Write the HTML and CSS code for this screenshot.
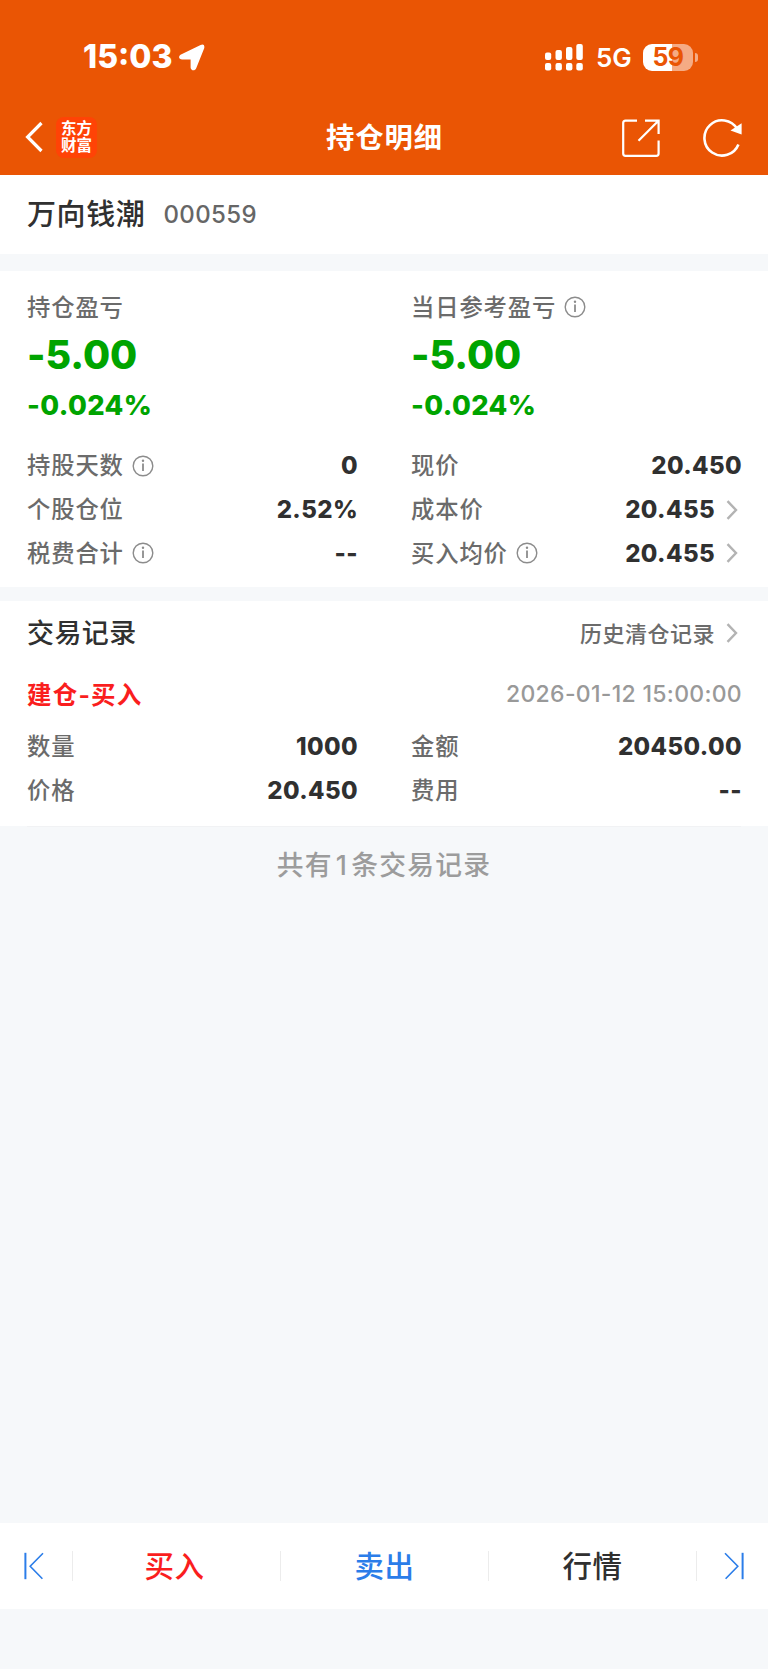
FILE: index.html
```html
<!DOCTYPE html>
<html lang="zh-CN">
<head>
  <meta charset="UTF-8">
  <title>持仓明细</title>
  <link rel="stylesheet" href="styles.css">
</head>
<body>
  <svg width="0" height="0" class="defs">
    <symbol id="info" viewBox="0 0 22 22">
      <circle cx="11" cy="11" r="9.8" fill="none" stroke="#8c8c8c" stroke-width="1.4"/>
      <path d="M11 8.6V16" stroke="#8c8c8c" stroke-width="1.8"/>
      <circle cx="11" cy="5.8" r="1.2" fill="#8c8c8c"/>
    </symbol>
    <symbol id="arrow" viewBox="0 0 12 20">
      <path d="M1.5 1.2L10 10L1.5 18.8" fill="none" stroke="#b3b3b3" stroke-width="2.4"/>
    </symbol>
  </svg>

  <header class="header">
    <div class="status">
      <span class="time">15:03</span>
      <svg class="location" width="26" height="27" viewBox="0 0 26 27">
        <path d="M2 10.6L21.6 .9Q26.2-.6 25.2 4.2L17.2 24.2C15.8 27.4 11.8 26.6 11.6 23.4V15.4H3.2C-.6 15.2-.8 12.2 2 10.6Z" fill="#fff"/>
      </svg>
      <svg class="signal" width="38" height="27" viewBox="0 0 38 27" fill="#fff">
        <rect x="0" y="8.5" width="6.2" height="7.5" rx="2"/>
        <rect x="10.5" y="6" width="6.4" height="10" rx="2"/>
        <rect x="21" y="3" width="6.4" height="13" rx="2"/>
        <rect x="31.3" y="0" width="6.5" height="16" rx="2"/>
        <rect x="0" y="19" width="6.2" height="7.5" rx="2"/>
        <rect x="10.5" y="19" width="6.4" height="7.5" rx="2"/>
        <rect x="21" y="19" width="6.4" height="7.5" rx="2"/>
        <rect x="31.3" y="19" width="6.5" height="7.5" rx="2"/>
      </svg>
      <span class="network">5G</span>
      <div class="battery"><span class="battery-num">59</span></div>
      <span class="battery-cap"></span>
    </div>
    <div class="nav">
      <svg class="back" width="18" height="32" viewBox="0 0 18 32">
        <path d="M16.5 2L2.6 16L16.5 30" fill="none" stroke="#fff" stroke-width="3.2"/>
      </svg>
      <div class="logo">东方<br>财富</div>
      <h1 class="title">持仓明细</h1>
      <svg class="share" width="38" height="38" viewBox="0 0 38 38" fill="none" stroke="#fff" stroke-width="2.2">
        <path d="M15 1.6H3.5Q1.2 1.6 1.2 4V34.5Q1.2 36.8 3.5 36.8H34.3Q36.6 36.8 36.6 34.5V21.5"/>
        <path d="M23 1.6H36.6V15M36.2 2L16.5 21.8"/>
      </svg>
      <svg class="refresh" width="40" height="39" viewBox="0 0 40 39">
        <path d="M35.4 26.4A17.6 17.6 0 1 1 34.2 11" fill="none" stroke="#fff" stroke-width="2.6"/>
        <path d="M38.6 5.2V16.6L27.5 12.6Z" fill="#fff"/>
      </svg>
    </div>
  </header>

  <section class="stock">
    <span class="stock-name">万向钱潮</span>
    <span class="stock-code">000559</span>
  </section>

  <section class="summary">
    <div class="cols">
      <div class="col">
        <div class="label">持仓盈亏</div>
        <div class="profit">-5.00</div>
        <div class="percent">-0.024%</div>
      </div>
      <div class="col">
        <div class="label">当日参考盈亏<svg class="info"><use href="#info"/></svg></div>
        <div class="profit">-5.00</div>
        <div class="percent">-0.024%</div>
      </div>
    </div>
    <div class="cols details">
      <div class="col">
        <div class="row"><span class="label">持股天数<svg class="info"><use href="#info"/></svg></span><span class="value">0</span></div>
        <div class="row"><span class="label">个股仓位</span><span class="value">2.52%</span></div>
        <div class="row"><span class="label">税费合计<svg class="info"><use href="#info"/></svg></span><span class="value">--</span></div>
      </div>
      <div class="col">
        <div class="row"><span class="label">现价</span><span class="value">20.450</span></div>
        <div class="row"><span class="label">成本价</span><span class="value">20.455<svg class="arrow"><use href="#arrow"/></svg></span></div>
        <div class="row"><span class="label">买入均价<svg class="info"><use href="#info"/></svg></span><span class="value">20.455<svg class="arrow"><use href="#arrow"/></svg></span></div>
      </div>
    </div>
  </section>

  <section class="records">
    <div class="records-head">
      <h2>交易记录</h2>
      <span class="history">历史清仓记录<svg class="arrow"><use href="#arrow"/></svg></span>
    </div>
    <div class="trade-head">
      <span class="trade-type">建仓-买入</span>
      <span class="trade-time">2026-01-12 15:00:00</span>
    </div>
    <div class="cols trade">
      <div class="col">
        <div class="row"><span class="label">数量</span><span class="value">1000</span></div>
        <div class="row"><span class="label">价格</span><span class="value">20.450</span></div>
      </div>
      <div class="col">
        <div class="row"><span class="label">金额</span><span class="value">20450.00</span></div>
        <div class="row"><span class="label">费用</span><span class="value">--</span></div>
      </div>
    </div>
  </section>
  <p class="total">共有<span class="count">1</span>条交易记录</p>

  <footer class="tabs">
    <a class="tab-end first">
      <svg width="20" height="28" viewBox="0 0 20 28" fill="none" stroke="#2b7de9">
        <path d="M1.4 .8V27.2" stroke-width="2"/>
        <path d="M19 1.2L6.2 14.2L18.4 26.8" stroke-width="1.6"/>
      </svg>
    </a>
    <a class="tab buy">买入</a>
    <a class="tab sell">卖出</a>
    <a class="tab quote">行情</a>
    <a class="tab-end last">
      <svg width="20" height="28" viewBox="0 0 20 28" fill="none" stroke="#2b7de9">
        <path d="M18.6 .8V27.2" stroke-width="2"/>
        <path d="M1 1.2L13.8 14.2L1.6 26.8" stroke-width="1.6"/>
      </svg>
    </a>
  </footer>
</body>
</html>
```
FILE: styles.css
```css
* { box-sizing: border-box; }
body { margin: 0; min-height: 1669px; padding-bottom: 60px; display: flex; flex-direction: column; background: #f6f8fa; color: #303030; font-family: Inter, "Noto Sans CJK SC", sans-serif; }
h1, h2, p { margin: 0; }
svg { flex: none; }
.defs { position: absolute; }

.header { height: 175px; background: #ea5504; color: white; }
.status { display: flex; align-items: center; height: 100px; padding: 14px 0 0 83px; }
.time { width: 96px; font-size: 32px; font-weight: 800; line-height: 40px; }
.location { margin-top: 1px; }
.signal { margin-left: 340px; }
.network { width: 47px; margin-left: 13px; padding-top: 1px; font-size: 26px; font-weight: 600; line-height: 40px; }
.battery { width: 50px; height: 27px; border-radius: 9px; background: linear-gradient(90deg, #fff 29px, #f5ab84 29px); text-align: center; }
.battery-num { display: block; font-size: 25px; font-weight: 700; line-height: 27px; letter-spacing: -0.5px; color: #ea5504; }
.battery-cap { width: 3px; height: 9px; margin-left: 2px; border-radius: 0 4px 4px 0; background: #f5ab84; }
.nav { display: flex; align-items: center; height: 75px; padding: 0 24px 0 25px; }
.back { margin-bottom: 1px; }
.logo { width: 41px; height: 41px; margin-left: 13px; padding-top: 3px; border-radius: 8px; background: #ff4306; font-size: 15.5px; font-weight: 700; line-height: 17px; text-align: center; }
.title { flex: 1; margin-left: 50px; font-size: 28.3px; letter-spacing: 1px; line-height: 40px; text-align: center; }
.refresh { margin: 0 1px 1px 43px; }

.stock { display: flex; align-items: center; height: 79px; padding: 0 27px; background: white; }
.stock-name { font-size: 29px; font-weight: 500; letter-spacing: 0.6px; line-height: 40px; }
.stock-code { margin-left: 18px; font-size: 24px; font-weight: 500; letter-spacing: 0.4px; color: #666; }

.summary { height: 316px; margin-top: 17px; padding-top: 18px; background: white; }
.cols { display: grid; grid-template-columns: 331px 331px; column-gap: 53px; padding-left: 27px; }
.label { display: flex; align-items: center; height: 36px; padding-bottom: 3px; font-size: 23.3px; font-weight: 500; letter-spacing: 0.9px; color: #6b6b6b; }
.info { width: 22px; height: 22px; margin: 3px 0 0 8px; }
.profit { height: 60px; font-size: 39.3px; font-weight: 800; line-height: 60px; font-feature-settings: "calt" 0; color: #00a400; }
.percent { height: 42px; font-size: 27.3px; font-weight: 800; line-height: 42px; letter-spacing: 0.4px; font-feature-settings: "calt" 0; color: #00a400; }
.details { margin-top: 17px; }
.row { display: flex; align-items: center; justify-content: space-between; height: 43.7px; }
.value { display: flex; align-items: center; font-size: 24px; font-weight: 800; letter-spacing: 0.4px; font-feature-settings: "calt" 0; }
.arrow { width: 12px; height: 20px; margin: 0 4px 0 11px; }

.records { height: 225px; margin-top: 14px; background: white; }
.records-head, .trade-head { display: flex; align-items: center; justify-content: space-between; padding: 0 26px 0 27px; }
.records-head { height: 64px; padding-bottom: 3px; }
h2 { font-size: 27px; font-weight: 500; letter-spacing: 0.4px; }
.history { display: flex; align-items: center; font-size: 22px; font-weight: 500; letter-spacing: 0.5px; color: #6b6b6b; }
.history .arrow { margin-top: 2px; }
.trade-head { height: 59px; padding-bottom: 3px; }
.trade-type { font-size: 24.5px; font-weight: 700; letter-spacing: 1.2px; font-feature-settings: "calt" 0; color: #fa1e1e; }
.trade-time { padding-top: 2px; font-size: 23px; font-weight: 500; letter-spacing: 0.3px; color: #999; }
.trade { padding-top: 1px; }
.total { margin: 0 27px; padding-top: 18px; border-top: 1px solid #f1f2f4; font-size: 26.8px; font-weight: 500; line-height: 40px; letter-spacing: 1.2px; color: #9c9c9c; text-align: center; }
.count { margin: 0 3px; }

.tabs { display: flex; align-items: center; height: 86px; margin-top: auto; background: white; }
.tab, .tab-end { display: flex; align-items: center; justify-content: center; height: 30px; }
.tab { width: 208px; padding-bottom: 4px; border-left: 1px solid #ececec; font-size: 29.5px; font-weight: 500; letter-spacing: 0.5px; }
.tab-end { width: 72px; }
.first { padding-right: 4px; }
.last { padding-left: 3px; border-left: 1px solid #ececec; }
.buy { padding-right: 4px; color: #fa1e1e; }
.sell { color: #2b7de9; }
```
